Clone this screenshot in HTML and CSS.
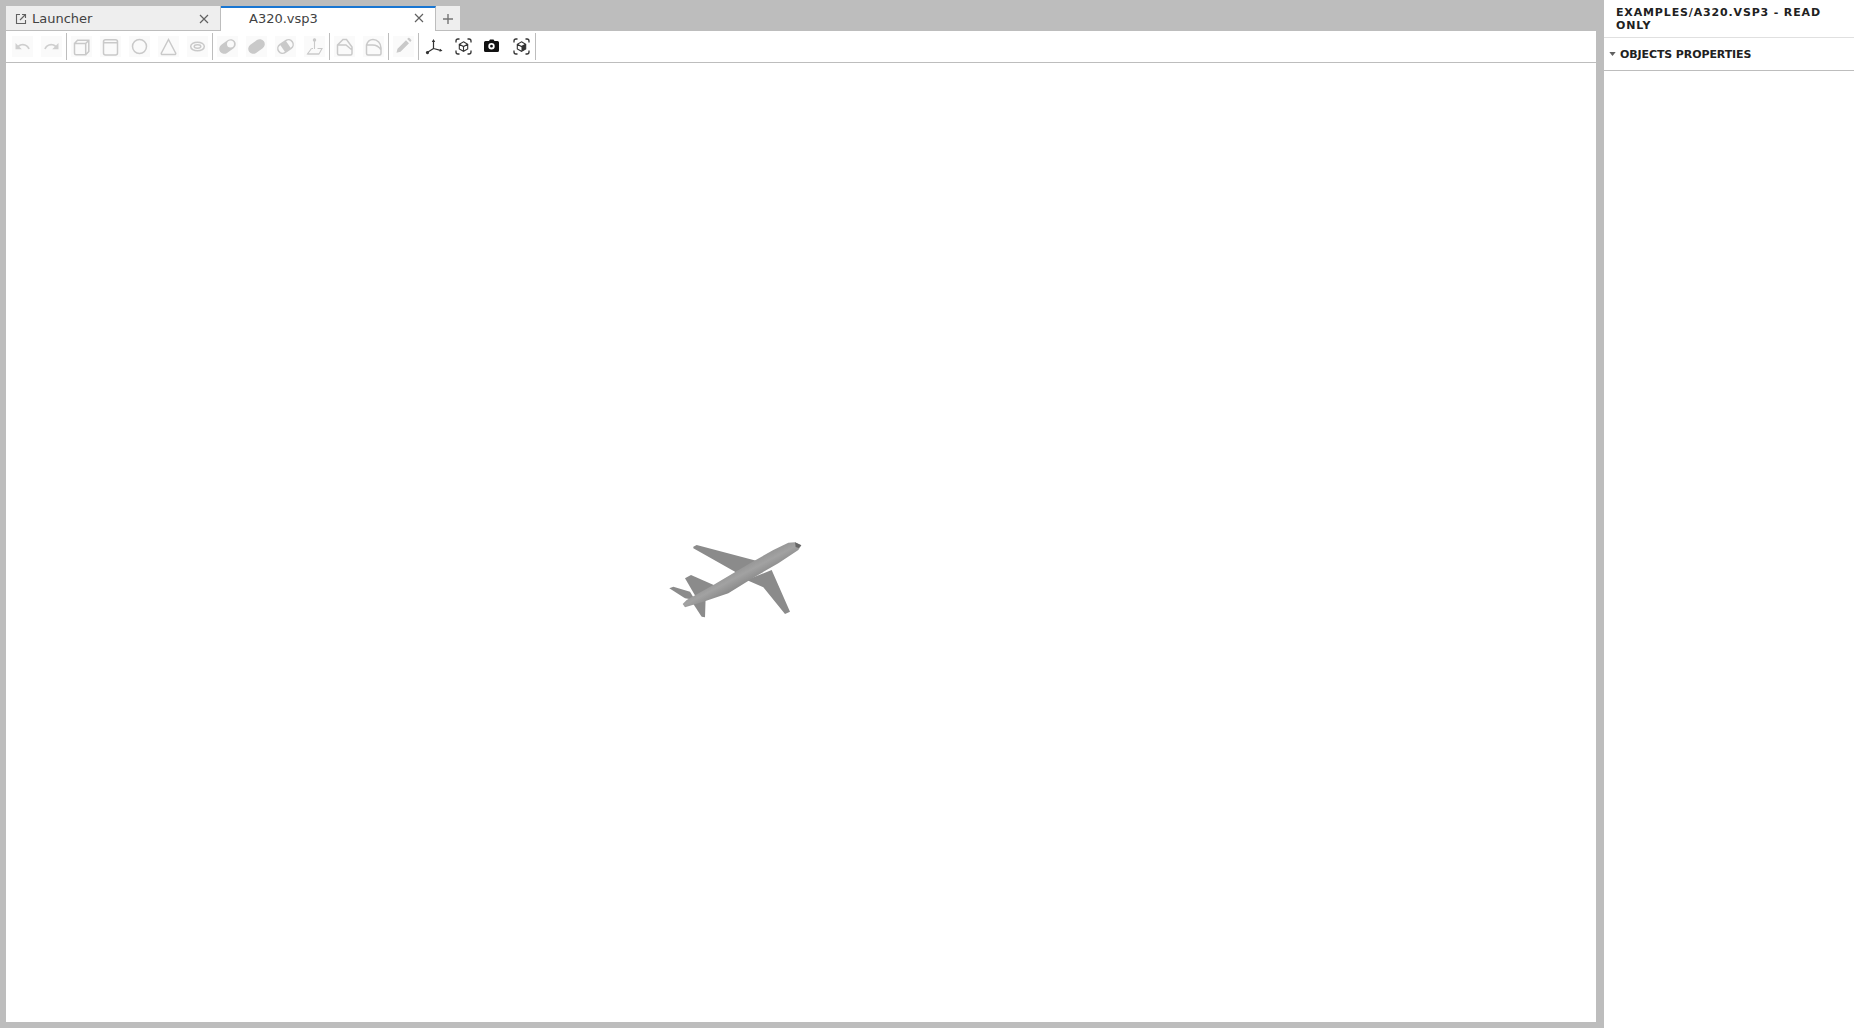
FILE: index.html
```html
<!doctype html>
<html>
  <head>
    <meta charset="utf-8" />
    <title>A320.vsp3</title>
    <link rel="stylesheet" href="styles.css">
  </head>
  <body>
    <div class="main">
      <div class="tabbar">
        <div class="tab tab-launcher">
          <svg class="tab-icon" viewBox="0 0 12 12"><path d="M5 1.500H1.500v9h9V7M7 1.500h3.500V5M10.500 1.500L5 7" /></svg>
          <span class="tab-label">Launcher</span>
          <svg class="tab-close" viewBox="0 0 10 10"><path d="M1 1l8 8M9 1l-8 8" /></svg>
        </div>
        <div class="tab tab-active">
          <span class="tab-label">A320.vsp3</span>
          <svg class="tab-close" viewBox="0 0 10 10"><path d="M1 1l8 8M9 1l-8 8" /></svg>
        </div>
        <div class="tab tab-add">
          <svg class="tab-plus" viewBox="0 0 10 10"><path d="M5 0v10M0 5h10" /></svg>
        </div>
      </div>

      <div class="toolbar">
        <div class="btn off"><svg viewBox="0 0 24 24" class="solid"><path d="M12.500 8c-2.650 0-5.050.99-6.900 2.600L2 7v9h9l-3.620-3.620c1.390-1.160 3.160-1.880 5.120-1.880 3.540 0 6.550 2.310 7.600 5.500l2.370-.78C21.080 11.030 17.150 8 12.500 8z" /></svg></div>
        <div class="btn off"><svg viewBox="0 0 24 24" class="solid"><path d="M18.400 10.600C16.550 8.990 14.150 8 11.500 8c-4.650 0-8.580 3.030-9.960 7.220L3.900 16c1.050-3.190 4.050-5.500 7.600-5.500 1.950 0 3.730.72 5.120 1.880L13 16h9V7l-3.600 3.600z" /></svg></div>
        <div class="sep"></div>
        <!-- primitives -->
        <div class="btn off"><svg viewBox="0 0 21 21" class="line"><path d="M3.500 7.500h11.200v11.200H5a1.500 1.500 0 0 1-1.500-1.500zM3.500 7.500l3-3.200h11.300v11.200l-3.100 3.200M14.700 7.500l3.100-3.200" /></svg></div>
        <div class="btn off"><svg viewBox="0 0 21 21" class="line"><path d="M3.500 5.500c0-1.200 1-1.800 2-1.800h10c1 0 2 .6 2 1.800v11.500a2 2 0 0 1-2 2h-10a2 2 0 0 1-2-2zM3.500 5.500c0 .9 1 1.300 2 1.300h10c1 0 2-.4 2-1.300" /></svg></div>
        <div class="btn off"><svg viewBox="0 0 21 21" class="line"><circle cx="10.500" cy="10.500" r="7" /></svg></div>
        <div class="btn off"><svg viewBox="0 0 21 21" class="line"><path d="M10.500 3.500L17.600 17a1 1 0 0 1-.9 1.500H4.300a1 1 0 0 1-.9-1.500z" /></svg></div>
        <div class="btn off"><svg viewBox="0 0 21 21" class="line"><ellipse cx="10.500" cy="10.500" rx="6.800" ry="4.300" /><ellipse cx="10.500" cy="10.500" rx="3.300" ry="1.700" /></svg></div>
        <div class="sep"></div>
        <!-- boolean ops -->
        <div class="btn off"><svg viewBox="0 0 21 21"><rect class="fill" x="1.500" y="5.500" width="18" height="10" rx="5" transform="rotate(-35 10.500 10.500)" /><circle class="hole" cx="13.500" cy="8" r="3.500" /></svg></div>
        <div class="btn off"><svg viewBox="0 0 21 21"><rect class="fill" x="1.500" y="5.500" width="18" height="10" rx="5" transform="rotate(-35 10.500 10.500)" /></svg></div>
        <div class="btn off"><svg viewBox="0 0 21 21"><rect class="fill" x="7" y="6" width="7" height="9" transform="rotate(-35 10.500 10.500)" /><rect class="line-only" x="2.200" y="5.800" width="16.600" height="9.400" rx="4.700" transform="rotate(-35 10.500 10.500)" /></svg></div>
        <div class="btn off"><svg viewBox="0 0 21 21" class="line thin"><path d="M10.500 4.500V13M7.500 12.500l-4 5.500h11.500l3-5.500h-4.500" /><path d="M3.500 18h11.500M7.500 12.500h1.500" /><circle cx="10.500" cy="4" r="1.200" class="dot" /></svg></div>
        <div class="sep"></div>
        <!-- fillet, chamfer -->
        <div class="btn off"><svg viewBox="0 0 21 21" class="line"><path d="M3.500 9l5.500-5.500h3.500l5.500 7.500v6.500a1.500 1.500 0 0 1-1.500 1.500H5A1.500 1.500 0 0 1 3.500 17.500zM3.500 9h8.500l6 5" /></svg></div>
        <div class="btn off"><svg viewBox="0 0 21 21" class="line"><path d="M3.500 9c1-3.500 3.500-5.500 6.500-5.500 4.500 0 8 4 8 8.500v5.500a1.500 1.500 0 0 1-1.500 1.500H5A1.500 1.500 0 0 1 3.500 17.500zM3.500 9h6c3.500 0 6.500 1.500 8.500 5" /></svg></div>
        <div class="sep"></div>
        <div class="btn off"><svg viewBox="0 0 21 21"><path class="fill" d="M13 4.200l3 3-8.500 8.500-4 1 1-4zM14.200 3l.9-.9a1 1 0 0 1 1.400 0l1.600 1.600a1 1 0 0 1 0 1.400l-.9.9z" /></svg></div>
        <div class="sep"></div>
        <!-- view tools -->
        <div class="btn nudge"><svg viewBox="0 0 21 21" class="axes"><path d="M9.500 12.500V5M9.500 12.500l7 1.800M9.500 12.500l-5.500 3.500" /><path class="head" d="M9.500 3l1.700 3h-3.400zM18.500 14.800l-3 1 .6-3zM3 15a1.600 1.600 0 1 0 1.800 2.400A1.600 1.600 0 0 0 3 15z" /></svg></div>
        <div class="btn nudge">
          <svg viewBox="0 0 21 21" class="focus">
            <path d="M3 6.500V5a2 2 0 0 1 2-2h1.500M14.500 3H16a2 2 0 0 1 2 2v1.500M18 14.500V16a2 2 0 0 1-2 2h-1.500M6.500 18H5a2 2 0 0 1-2-2v-1.500" />
            <path class="cube" d="M10.500 5.800l4.200 2.400v4.700l-4.200 2.400-4.200-2.400V8.200zM6.300 8.200l4.200 2.400 4.200-2.400M10.500 10.600v4.700" />
          </svg>
        </div>
        <div class="btn">
          <svg viewBox="0 0 21 21"><path class="camera" fill-rule="evenodd" d="M8 5l1-1.500h3.500L13.500 5h3A1.500 1.500 0 0 1 18 6.500v8a1.500 1.500 0 0 1-1.500 1.500h-12A1.500 1.500 0 0 1 3 14.500v-8A1.500 1.500 0 0 1 4.500 5zM10.500 7a3.200 3.200 0 1 0 0 6.400 3.200 3.200 0 0 0 0-6.400zM10.500 8.800a1.400 1.400 0 1 1 0 2.800 1.400 1.400 0 0 1 0-2.800z" /></svg>
        </div>
        <div class="btn nudge">
          <svg viewBox="0 0 21 21" class="focus">
            <path d="M3 6.500V5a2 2 0 0 1 2-2h1.500M14.500 3H16a2 2 0 0 1 2 2v1.500M18 14.500V16a2 2 0 0 1-2 2h-1.500M6.500 18H5a2 2 0 0 1-2-2v-1.500" />
            <path class="cube" d="M10.500 5.800l4.200 2.400v4.700l-4.200 2.400-4.200-2.400V8.200zM6.300 8.200l4.200 2.400 4.200-2.400" />
            <path class="cube-fill" d="M14.700 8.200v4.700l-4.200 2.400v-4.700z" />
          </svg>
        </div>
        <div class="sep"></div>
      </div>

      <div class="viewport">
        <svg class="plane" viewBox="0 0 450 300">
          <defs>
            <linearGradient id="body" gradientUnits="userSpaceOnUse" x1="228" y1="95" x2="272" y2="178">
              <stop offset="0" stop-color="#8a8a8a" />
              <stop offset="0.45" stop-color="#a2a2a2" />
              <stop offset="0.75" stop-color="#8c8c8c" />
              <stop offset="1" stop-color="#6e6e6e" />
            </linearGradient>
          </defs>
          <path class="wing" d="M100 50l10-5 190 50-60 50-15-20-125-70z" />
          <path class="wing" d="M260 150l75-30 55 125-15 7-65-80z" />
          <path class="wing" d="M75 145l18-10 80 35-60 40z" />
          <path class="wing" d="M100 222l37-22-2 62-10-2z" />
          <path class="wing" d="M28 175l12-5 50 15 15 25-30-5z" />
          <path fill="url(#body)" d="M424 46l-19-9-20 1-45 22-70 40-110 65-80 45-12 12 7 10 55-17 75-25 80-50 70-40 60-40z" />
          <path fill="#666" d="M405 37l19 9-8 8-9-3z" />
        </svg>
      </div>
    </div>

    <div class="panel">
      <div class="panel-title">EXAMPLES/A320.VSP3 - READ ONLY</div>
      <div class="section">
        <svg class="caret" viewBox="0 0 8 5"><path d="M0 0h8L4 5z" /></svg>
        <span>OBJECTS PROPERTIES</span>
      </div>
    </div>
  </body>
</html>
```

FILE: styles.css
```css
body {
  margin: 0;
  height: 1028px;
  display: flex;
  overflow: hidden;
  background-color: #bdbdbd;
  font-family: "DejaVu Sans", sans-serif;
}

.main {
  width: 1590px;
  margin-left: 6px;
  padding: 6px 0;
  display: flex;
  flex-direction: column;
}

.tabbar {
  display: flex;
  height: 25px;
  color: #424242;
  font-size: 13px;
}

.tab {
  display: flex;
  align-items: center;
  box-sizing: border-box;
  background-color: #eeeeee;
  border-right: 1px solid #bdbdbd;
}

.tab-launcher {
  width: 215px;
  padding: 1px 0 0 9px;
  border-bottom: 1px solid #bdbdbd;
}

.tab-active {
  width: 215px;
  padding: 0 0 3px 28px;
  background-color: #fff;
  border-top: 2px solid #1976d2;
}

.tab-add {
  width: 25px;
  padding-top: 1px;
  justify-content: center;
  border-bottom: 1px solid #bdbdbd;
}

.tab-label {
  flex: 1;
  white-space: nowrap;
}

.tab-icon {
  width: 12px;
  height: 12px;
  margin-right: 5px;
  fill: none;
  stroke: #616161;
  stroke-width: 1.1;
}

.tab-close {
  width: 10px;
  height: 10px;
  margin-right: 11px;
  fill: none;
  stroke: #616161;
  stroke-width: 1.2;
}

.tab-plus {
  width: 10px;
  height: 10px;
  fill: none;
  stroke: #757575;
  stroke-width: 1.4;
}

.toolbar {
  display: flex;
  align-items: center;
  height: 32px;
  padding: 0 0 1px 2px;
  box-sizing: border-box;
  background-color: #fff;
  border-bottom: 1px solid #bdbdbd;
}

.btn {
  width: 21px;
  height: 21px;
  margin: 0 4px;
  flex: none;
}

.btn svg {
  display: block;
  width: 21px;
  height: 21px;
}

.btn.nudge svg {
  margin-left: 0.5px;
}

.off {
  background-color: #fafafa;
}

.sep {
  width: 1px;
  height: 27px;
  flex: none;
  background-color: #bdbdbd;
}

.solid {
  fill: #cfcfcf;
  transform: scale(0.8);
}

.line {
  fill: none;
  stroke: #c9c9c9;
  stroke-width: 1.5;
}

.thin {
  stroke-width: 1.1;
}

.dot {
  fill: #c9c9c9;
}

.fill {
  fill: #c9c9c9;
}

.hole {
  fill: #fafafa;
}

.line-only {
  fill: none;
  stroke: #c9c9c9;
  stroke-width: 1.5;
}

.axes {
  fill: none;
  stroke: #333;
  stroke-width: 1.2;
}

.axes .head {
  fill: #333;
  stroke: none;
}

.focus {
  fill: none;
  stroke: #333;
  stroke-width: 1.3;
}

.focus .cube {
  stroke-width: 1.1;
}

.focus .cube-fill {
  fill: #333;
  stroke: none;
}

.camera {
  fill: #111;
}

.viewport {
  flex: 1;
  position: relative;
  background-color: #fff;
}

.plane {
  position: absolute;
  left: 654px;
  top: 467px;
  width: 150px;
  height: 100px;
  filter: blur(0.4px);
}

.wing {
  fill: #8b8b8b;
}

.panel {
  width: 250px;
  margin-left: 8px;
  background-color: #fff;
  color: #212121;
}

.panel-title {
  padding: 6px 12px 5px;
  height: 26px;
  font-size: 11px;
  line-height: 13px;
  font-weight: 700;
  letter-spacing: 0.85px;
  border-bottom: 1px solid #e0e0e0;
}

.section {
  display: flex;
  align-items: center;
  height: 32px;
  padding-left: 5px;
  font-size: 11px;
  font-weight: 700;
  letter-spacing: -0.1px;
  border-bottom: 1px solid #bdbdbd;
}

.caret {
  width: 7px;
  height: 4px;
  margin-right: 4px;
  fill: #616161;
}
```
